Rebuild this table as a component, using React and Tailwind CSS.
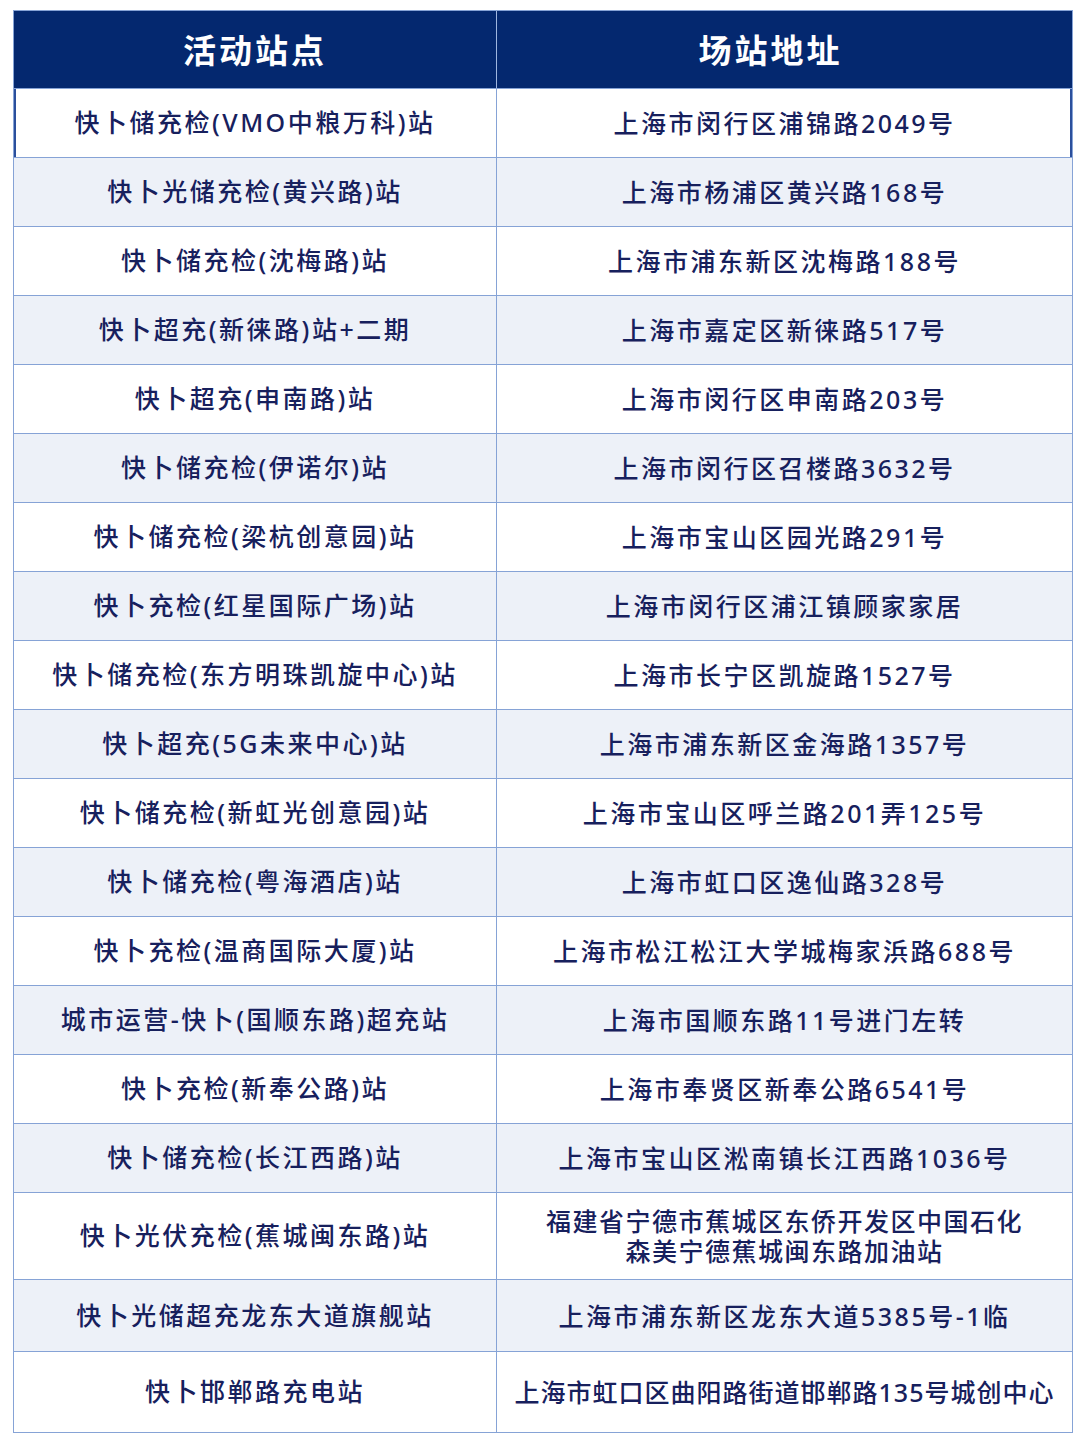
const rows = [
  ["快卜储充检(VMO中粮万科)站", "上海市闵行区浦锦路2049号"],
  ["快卜光储充检(黄兴路)站", "上海市杨浦区黄兴路168号"],
  ["快卜储充检(沈梅路)站", "上海市浦东新区沈梅路188号"],
  ["快卜超充(新徕路)站+二期", "上海市嘉定区新徕路517号"],
  ["快卜超充(申南路)站", "上海市闵行区申南路203号"],
  ["快卜储充检(伊诺尔)站", "上海市闵行区召楼路3632号"],
  ["快卜储充检(梁杭创意园)站", "上海市宝山区园光路291号"],
  ["快卜充检(红星国际广场)站", "上海市闵行区浦江镇顾家家居"],
  ["快卜储充检(东方明珠凯旋中心)站", "上海市长宁区凯旋路1527号"],
  ["快卜超充(5G未来中心)站", "上海市浦东新区金海路1357号"],
  ["快卜储充检(新虹光创意园)站", "上海市宝山区呼兰路201弄125号"],
  ["快卜储充检(粤海酒店)站", "上海市虹口区逸仙路328号"],
  ["快卜充检(温商国际大厦)站", "上海市松江松江大学城梅家浜路688号"],
  ["城市运营-快卜(国顺东路)超充站", "上海市国顺东路11号进门左转"],
  ["快卜充检(新奉公路)站", "上海市奉贤区新奉公路6541号"],
  ["快卜储充检(长江西路)站", "上海市宝山区淞南镇长江西路1036号"],
  ["快卜光伏充检(蕉城闽东路)站", "福建省宁德市蕉城区东侨开发区中国石化\n森美宁德蕉城闽东路加油站", "h-[87px]", "tracking-[1.5px]"],
  ["快卜光储超充龙东大道旗舰站", "上海市浦东新区龙东大道5385号-1临", "h-[72px]"],
  ["快卜邯郸路充电站", "上海市虹口区曲阳路街道邯郸路135号城创中心", "h-[81px]", "tracking-[1px]"],
];

export default function App() {
  return (
    <div
      className="w-[1085px] h-[1450px] bg-white pt-[10px] pl-[13px]"
      style={{ fontFamily: '"Noto Sans", "Noto Sans CJK SC", sans-serif' }}
    >
      <div className="w-[1060px] border border-[#86a3d6]">
        {/* Header */}
        <div
          className="flex h-[77px] bg-[#04286f] text-white font-bold text-[33px] tracking-[3px]"
          style={{ fontFamily: '"Noto Sans CJK SC", sans-serif' }}
        >
          <div className="w-[483px] flex items-center justify-center border-r border-[#9fb6e0]">
            活动站点
          </div>
          <div className="flex-1 flex items-center justify-center pr-[28px]">场站地址</div>
        </div>

        {rows.map(([name, addr, h, track], i) => (
          <div
            key={i}
            className={
              "flex border-t border-[#86a3d6] text-[#17205d] font-medium text-[25px] tracking-[2.5px] " +
              (h || "h-[69px]") +
              (i % 2 === 1 ? " bg-[#edf1f8]" : " bg-white") +
              (i === 0 ? " shadow-[inset_2px_0_0_#2b4f9c,inset_-2px_0_0_#2b4f9c]" : "")
            }
          >
            <div className="w-[483px] flex items-center justify-center border-r border-[#86a3d6] text-center">
              {name}
            </div>
            <div
              className={
                "flex-1 flex items-center justify-center text-center whitespace-pre-line leading-[30px] " +
                (track || "")
              }
            >
              {addr}
            </div>
          </div>
        ))}
      </div>
    </div>
  );
}
